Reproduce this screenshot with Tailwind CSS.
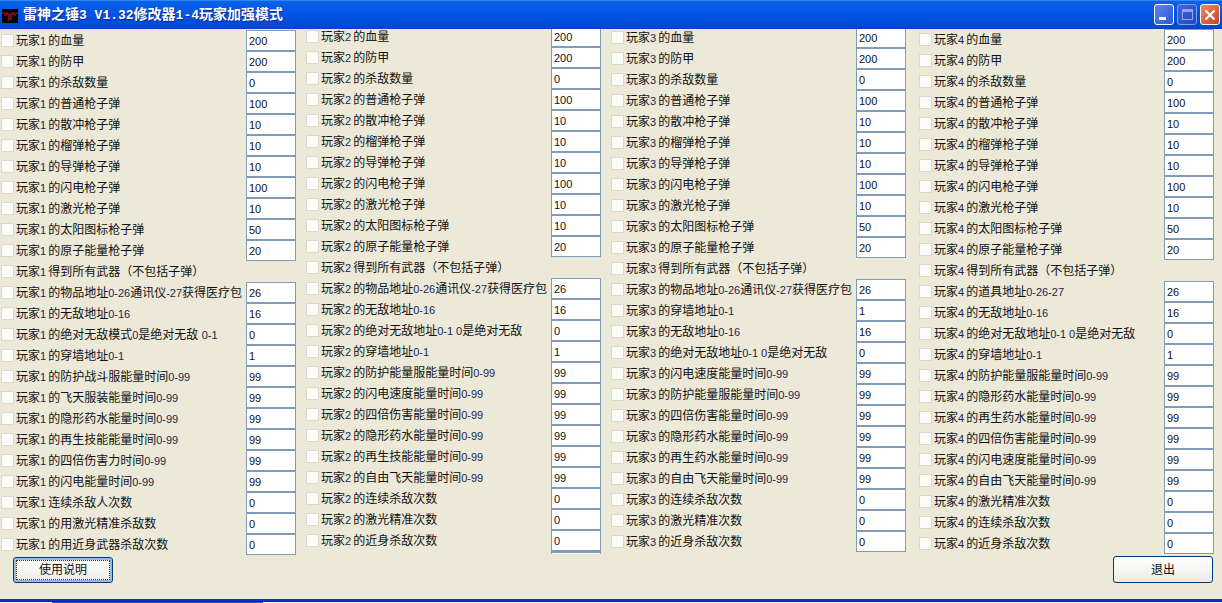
<!DOCTYPE html>
<html lang="zh-CN">
<head>
  <meta charset="UTF-8">
  <title>雷神之锤3 V1.32修改器1-4玩家加强模式</title>
  <script src="https://cdn.jsdelivr.net/npm/@tailwindcss/browser@4"></script>
</head>
<body class="bg-white">
  <div class="w-[1222px] h-[603px] flex flex-col overflow-hidden bg-[#ece9d8] font-['Liberation_Sans','Noto_Sans_CJK_SC',sans-serif] text-[12px] text-[#111]">
    <!-- Title bar -->
    <header class="h-[29px] shrink-0 relative z-10 flex items-center pl-[2px] pr-[2px] pt-[2px] bg-gradient-to-b from-[#0a62e8] via-[#0054e3] to-[#0047d0] border-t border-[#2f86f5] border-b border-b-[#0a3fc0]">
      <div class="w-[16px] h-[14px] mt-px bg-black flex items-center justify-center shrink-0">
        <svg width="16" height="14" viewBox="0 0 16 14"><path d="M0 4h5l2 2M16 4h-5l-2 2M7 5v7M9 5v6M2 6h3M11 6h3" fill="none" stroke="#c8141c" stroke-width="1.2"/></svg>
      </div>
      <h1 class="ml-[5px] font-['Liberation_Mono','Noto_Sans_CJK_SC',monospace] font-bold text-[14px] text-white whitespace-pre [text-shadow:1px_1px_0_#0a2a90]">雷神之锤<span class="text-[13px]">3 V1.32</span>修改器<span class="text-[13px]">1-4</span>玩家加强模式</h1>
      <div class="ml-auto -mt-[2px] flex gap-[3px]">
        <button class="w-[20px] h-[21px] rounded-[3px] border border-white bg-gradient-to-br from-[#5c86ee] to-[#2a55d8] flex items-end pl-[4px] pb-[4px]">
          <span class="block w-[7px] h-[3px] bg-white"></span>
        </button>
        <button class="w-[20px] h-[21px] rounded-[3px] border border-[#7f9df0] bg-gradient-to-br from-[#3f66dc] to-[#2146c4] flex items-center justify-center">
          <span class="block w-[11px] h-[11px] border border-[#8fa6ec] border-t-[3px]"></span>
        </button>
        <button class="w-[20px] h-[21px] rounded-[3px] border border-white bg-gradient-to-br from-[#ea8a6c] to-[#c8401a] flex items-center justify-center">
          <svg width="12" height="12" viewBox="0 0 12 12"><path d="M1.5 1.5l9 9M10.5 1.5l-9 9" stroke="#fff" stroke-width="2"/></svg>
        </button>
      </div>
    </header>

    <!-- Four player columns, filled in below -->
    <main class="flex-1 min-h-0 relative overflow-hidden">
      <div class="flex pl-px">
        <div id="p1" class="w-[295px] mt-px"></div>
        <div id="p2" class="w-[295px] ml-[10px] -mt-[3px]"></div>
        <div id="p3" class="w-[295px] ml-[10px] -mt-[2px]"></div>
        <div id="p4" class="w-[295px] ml-[13px]"></div>
      </div>
      <button class="absolute left-[13px] top-[528px] w-[100px] h-[26px] rounded-[3px] border border-[#003c74] bg-gradient-to-b from-white to-[#ecebe5] shadow-[inset_0_0_0_2px_#9db8e0] outline-1 outline-dotted -outline-offset-4 outline-[#333]">使用说明</button>
      <button class="absolute left-[1113px] top-[527px] w-[100px] h-[27px] rounded-[3px] border border-[#003c74] bg-gradient-to-b from-white to-[#ecebe5]">退出</button>
    </main>

    <!-- Bottom window edge -->
    <div class="h-[3px] shrink-0 bg-[#0831d9] border-b border-[#06248f]"></div>
    <div class="h-px shrink-0 bg-white flex">
      <div class="w-[52px] ml-0"></div>
      <div class="w-[211px] bg-[#3a50c8]"></div>
    </div>
  </div>

  <script>
    const rowClass = 'h-[21px] flex items-center'
    const boxClass = 'w-[13px] h-[13px] shrink-0 bg-[#fbfbf8] border border-[#dcd9cc]'
    const labelClass = 'flex-1 ml-[2px] pt-px whitespace-nowrap'
    const numClass = 'text-[11px] text-[#1c2450]'
    const playerNumClass = 'text-[11px] text-[#1c2450] pr-[2px]'
    const inputClass = 'w-[50px] h-[21px] shrink-0 bg-white border border-[#7f9db9] pl-[2px] text-[11px] text-[#111] outline-none'

    const columns = {
      p1: [
        ['玩家1的血量', '200'], ['玩家1的防甲', '200'], ['玩家1的杀敌数量', '0'], ['玩家1的普通枪子弹', '100'],
        ['玩家1的散冲枪子弹', '10'], ['玩家1的榴弹枪子弹', '10'], ['玩家1的导弹枪子弹', '10'], ['玩家1的闪电枪子弹', '100'],
        ['玩家1的激光枪子弹', '10'], ['玩家1的太阳图标枪子弹', '50'], ['玩家1的原子能量枪子弹', '20'],
        ['玩家1得到所有武器（不包括子弹）'],
        ['玩家1的物品地址0-26通讯仪-27获得医疗包', '26'], ['玩家1的无敌地址0-16', '16'], ['玩家1的绝对无敌模式0是绝对无敌 0-1', '0'],
        ['玩家1的穿墙地址0-1', '1'], ['玩家1的防护战斗服能量时间0-99', '99'], ['玩家1的飞天服装能量时间0-99', '99'],
        ['玩家1的隐形药水能量时间0-99', '99'], ['玩家1的再生技能能量时间0-99', '99'], ['玩家1的四倍伤害力时间0-99', '99'],
        ['玩家1的闪电能量时间0-99', '99'], ['玩家1连续杀敌人次数', '0'], ['玩家1的用激光精准杀敌数', '0'], ['玩家1的用近身武器杀敌次数', '0'],
      ],
      p2: [
        ['玩家2的血量', '200'], ['玩家2的防甲', '200'], ['玩家2的杀敌数量', '0'], ['玩家2的普通枪子弹', '100'],
        ['玩家2的散冲枪子弹', '10'], ['玩家2的榴弹枪子弹', '10'], ['玩家2的导弹枪子弹', '10'], ['玩家2的闪电枪子弹', '100'],
        ['玩家2的激光枪子弹', '10'], ['玩家2的太阳图标枪子弹', '10'], ['玩家2的原子能量枪子弹', '20'],
        ['玩家2得到所有武器（不包括子弹）'],
        ['玩家2的物品地址0-26通讯仪-27获得医疗包', '26'], ['玩家2的无敌地址0-16', '16'], ['玩家2的绝对无敌地址0-1 0是绝对无敌', '0'],
        ['玩家2的穿墙地址0-1', '1'], ['玩家2的防护能量服能量时间0-99', '99'], ['玩家2的闪电速度能量时间0-99', '99'],
        ['玩家2的四倍伤害能量时间0-99', '99'], ['玩家2的隐形药水能量时间0-99', '99'], ['玩家2的再生技能能量时间0-99', '99'],
        ['玩家2的自由飞天能量时间0-99', '99'], ['玩家2的连续杀敌次数', '0'], ['玩家2的激光精准次数', '0'], ['玩家2的近身杀敌次数', '0'],
      ],
      p3: [
        ['玩家3的血量', '200'], ['玩家3的防甲', '200'], ['玩家3的杀敌数量', '0'], ['玩家3的普通枪子弹', '100'],
        ['玩家3的散冲枪子弹', '10'], ['玩家3的榴弹枪子弹', '10'], ['玩家3的导弹枪子弹', '10'], ['玩家3的闪电枪子弹', '100'],
        ['玩家3的激光枪子弹', '10'], ['玩家3的太阳图标枪子弹', '50'], ['玩家3的原子能量枪子弹', '20'],
        ['玩家3得到所有武器（不包括子弹）'],
        ['玩家3的物品地址0-26通讯仪-27获得医疗包', '26'], ['玩家3的穿墙地址0-1', '1'], ['玩家3的无敌地址0-16', '16'],
        ['玩家3的绝对无敌地址0-1 0是绝对无敌', '0'], ['玩家3的闪电速度能量时间0-99', '99'], ['玩家3的防护能量服能量时间0-99', '99'],
        ['玩家3的四倍伤害能量时间0-99', '99'], ['玩家3的隐形药水能量时间0-99', '99'], ['玩家3的再生药水能量时间0-99', '99'],
        ['玩家3的自由飞天能量时间0-99', '99'], ['玩家3的连续杀敌次数', '0'], ['玩家3的激光精准次数', '0'], ['玩家3的近身杀敌次数', '0'],
      ],
      p4: [
        ['玩家4的血量', '200'], ['玩家4的防甲', '200'], ['玩家4的杀敌数量', '0'], ['玩家4的普通枪子弹', '100'],
        ['玩家4的散冲枪子弹', '10'], ['玩家4的榴弹枪子弹', '10'], ['玩家4的导弹枪子弹', '10'], ['玩家4的闪电枪子弹', '100'],
        ['玩家4的激光枪子弹', '10'], ['玩家4的太阳图标枪子弹', '50'], ['玩家4的原子能量枪子弹', '20'],
        ['玩家4得到所有武器（不包括子弹）'],
        ['玩家4的道具地址0-26-27', '26'], ['玩家4的无敌地址0-16', '16'], ['玩家4的绝对无敌地址0-1 0是绝对无敌', '0'],
        ['玩家4的穿墙地址0-1', '1'], ['玩家4的防护能量服能量时间0-99', '99'], ['玩家4的隐形药水能量时间0-99', '99'],
        ['玩家4的再生药水能量时间0-99', '99'], ['玩家4的四倍伤害能量时间0-99', '99'], ['玩家4的闪电速度能量时间0-99', '99'],
        ['玩家4的自由飞天能量时间0-99', '99'], ['玩家4的激光精准次数', '0'], ['玩家4的连续杀敌次数', '0'], ['玩家4的近身杀敌次数', '0'],
      ],
    }

    for (const [id, rows] of Object.entries(columns)) {
      document.getElementById(id).innerHTML = rows.map(([label, value]) => {
        // latin digits are a smaller face than the chinese text
        const rest = label.slice(3).replace(/[0-9][0-9 -]*|-[0-9]+/g, m => `<span class="${numClass}">${m}</span>`)
        const text = `玩家<span class="${playerNumClass}">${label[2]}</span>${rest}`
        const input = value ? `<input class="${inputClass}" value="${value}">` : ''
        return `<div class="${rowClass}"><span class="${boxClass}"></span><span class="${labelClass}">${text}</span>${input}</div>`
      }).join('')
    }
    // sliver of a cut off input under the second column
    document.getElementById('p2').insertAdjacentHTML('beforeend', '<div class="ml-[245px] w-[50px] h-[3px] bg-white border-t-2 border-x border-[#7f9db9]"></div>')
  </script>
</body>
</html>
